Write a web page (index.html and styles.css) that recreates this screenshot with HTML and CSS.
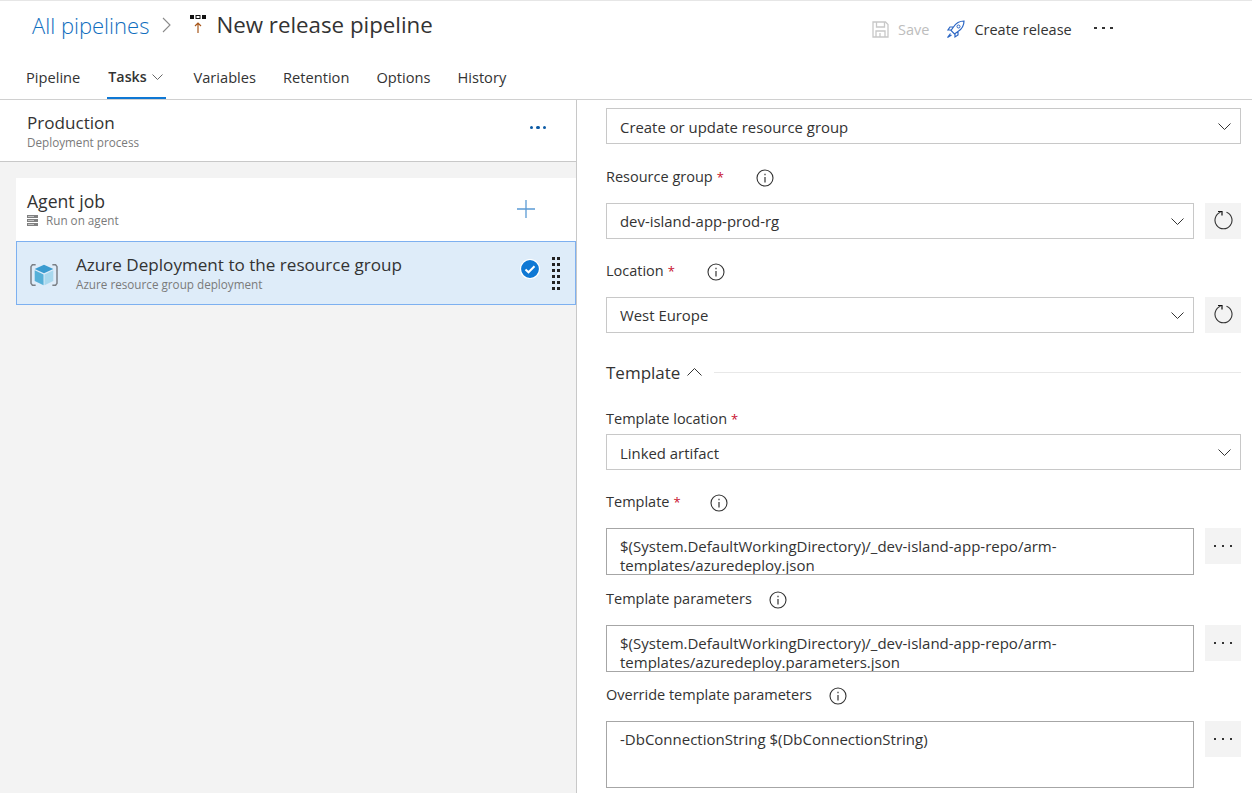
FILE: index.html
```html
<!DOCTYPE html>
<html lang="en">
<head>
    <meta charset="utf-8">
    <title>New release pipeline</title>
    <link rel="stylesheet" href="styles.css">
</head>
<body>
    <div class="page-head">
        <div class="title-row">
            <div class="crumbs">
                <a class="crumb-link">All pipelines</a>
                <svg class="crumb-sep" width="9" height="16" viewBox="0 0 9 16"><path d="M1 1l7 7-7 7" fill="none" stroke="#8a8a8a" stroke-width="1.100"/></svg>
                <svg class="pipe-icon" width="17" height="20" viewBox="0 0 17 20">
                    <rect x="0" y="0" width="4" height="4" fill="#111"/>
                    <rect x="6" y="0.500" width="4" height="3" fill="#fff" stroke="#111"/>
                    <rect x="12" y="0" width="4" height="4" fill="#111"/>
                    <path d="M8 18V8M5 11l3-3 3 3" fill="none" stroke="#a8581c" stroke-width="1.200"/>
                </svg>
                <h1>New release pipeline</h1>
            </div>
            <div class="commands">
                <span class="cmd cmd-off">
                    <svg width="17" height="17" viewBox="0 0 17 17"><path d="M1 1h12.500L16 3.500V16H1zM4.500 1v5h8V1M4 16v-6h9v6M8 12v4" fill="none" stroke="#c8c8c8" stroke-width="1.300"/></svg>
                    Save
                </span>
                <span class="cmd">
                    <svg width="19" height="19" viewBox="0 0 19 19"><path d="M18 1c-4.500 0-8 2-10.500 6L5 10.500 8.500 14l3.500-2.500C16 9 18 5.500 18 1zM7.500 7H4L2 10h3M12 11.500V15l-3 2v-3M4.500 13.500L1.500 17.500 5.500 15" fill="none" stroke="#2b66c4" stroke-width="1.200"/><circle cx="12.500" cy="6.500" r="1.500" fill="none" stroke="#2b66c4"/></svg>
                    Create release
                </span>
                <span class="cmd-more">
                    <i></i><i></i><i></i>
                </span>
            </div>
        </div>
        <div class="tabs">
            <a class="tab">Pipeline</a>
            <a class="tab active">Tasks <svg width="11" height="6" viewBox="0 0 11 6"><path d="M.5.500l5 5 5-5" fill="none" stroke="#666"/></svg></a>
            <a class="tab">Variables</a>
            <a class="tab">Retention</a>
            <a class="tab">Options</a>
            <a class="tab">History</a>
        </div>
    </div>

    <div class="main">
        <div class="left">
            <div class="stage">
                <div>
                    <div class="item-name">Production</div>
                    <div class="item-sub">Deployment process</div>
                </div>
                <span class="stage-more"><i></i><i></i><i></i></span>
            </div>
            <div class="job-list">
                <div class="job">
                    <div>
                        <div class="item-name job-name">Agent job</div>
                        <div class="item-sub">
                            <svg class="server" width="11" height="11" viewBox="0 0 11 11"><path d="M0 0h11v3H0zM0 4h11v3H0zM0 8h11v3H0z" fill="#808080"/><path d="M1 1.500h6M1 5.500h6M1 9.500h6" stroke="#c4c4c4"/></svg>
                            Run on agent
                        </div>
                    </div>
                    <svg class="plus" width="18" height="18" viewBox="0 0 18 18"><path d="M9 0v18M0 9h18" stroke="#5b9bd5" stroke-width="1.300"/></svg>
                </div>
                <div class="task">
                    <svg class="cube" width="28" height="26" viewBox="0 0 30 28">
                        <path d="M6 3H2.500L1 5v18l1.500 2H6M24 3h3.500L29 5v18l-1.500 2H24" fill="none" stroke="#7a7f85" stroke-width="1.600"/>
                        <path d="M15 3l10 4.500L15 12 5 7.500z" fill="#3a9bd0"/>
                        <path d="M5 9l9.500 4.500V25L5 20.500z" fill="#55b0d8"/>
                        <path d="M25 9l-9.500 4.500V25l9.500-4.500z" fill="#a8d8ee"/>
                    </svg>
                    <div class="task-text">
                        <div class="item-name">Azure Deployment to the resource group</div>
                        <div class="item-sub">Azure resource group deployment</div>
                    </div>
                    <svg class="check" width="20" height="20" viewBox="0 0 20 20"><circle cx="10" cy="10" r="9.500" fill="#0f78d4" stroke="#fff" stroke-width="1.200"/><path d="M5.500 10.500l3 2.800 6-6" fill="none" stroke="#fff" stroke-width="2"/></svg>
                    <span class="grip"><i></i><i></i><i></i><i></i><i></i><i></i><i></i><i></i><i></i><i></i><i></i><i></i></span>
                </div>
            </div>
        </div>

        <div class="right">
            <div class="select">Create or update resource group<svg class="chev" width="13" height="7" viewBox="0 0 13 7"><path d="M.5.500l6 6 6-6" fill="none" stroke="#333"/></svg></div>

            <div class="label label-first">Resource group <b>*</b>
                <svg class="info" width="18" height="18" viewBox="0 0 18 18"><circle cx="9" cy="9" r="8" fill="none" stroke="#333" stroke-width="1.100"/><path d="M9 8v5.500M9 4.800v1.500" stroke="#333" stroke-width="1.200"/></svg>
            </div>
            <div class="field-row">
                <div class="select">dev-island-app-prod-rg<svg class="chev" width="13" height="7" viewBox="0 0 13 7"><path d="M.5.500l6 6 6-6" fill="none" stroke="#333"/></svg></div>
                <span class="side-btn"><svg class="refresh" width="20" height="20" viewBox="0 0 20 20"><path d="M12.500 2.300A8.500 8.500 0 1 1 6.500 2.300" fill="none" stroke="#333" stroke-width="1.100"/><path d="M4 1.500h4v4" fill="none" stroke="#111" stroke-width="1.200"/></svg></span>
            </div>

            <div class="label label-loc">Location <b>*</b>
                <svg class="info" width="18" height="18" viewBox="0 0 18 18"><circle cx="9" cy="9" r="8" fill="none" stroke="#333" stroke-width="1.100"/><path d="M9 8v5.500M9 4.800v1.500" stroke="#333" stroke-width="1.200"/></svg>
            </div>
            <div class="field-row">
                <div class="select">West Europe<svg class="chev" width="13" height="7" viewBox="0 0 13 7"><path d="M.5.500l6 6 6-6" fill="none" stroke="#333"/></svg></div>
                <span class="side-btn"><svg class="refresh" width="20" height="20" viewBox="0 0 20 20"><path d="M12.500 2.300A8.500 8.500 0 1 1 6.500 2.300" fill="none" stroke="#333" stroke-width="1.100"/><path d="M4 1.500h4v4" fill="none" stroke="#111" stroke-width="1.200"/></svg></span>
            </div>

            <div class="section">
                <span>Template</span>
                <svg width="15" height="8" viewBox="0 0 15 8"><path d="M.5 7.500l7-7 7 7" fill="none" stroke="#333"/></svg>
                <div class="section-line"></div>
            </div>

            <div class="label label-tight">Template location <b>*</b></div>
            <div class="select">Linked artifact<svg class="chev" width="13" height="7" viewBox="0 0 13 7"><path d="M.5.500l6 6 6-6" fill="none" stroke="#333"/></svg></div>

            <div class="label label-tpl">Template <b>*</b>
                <svg class="info info-tpl" width="18" height="18" viewBox="0 0 18 18"><circle cx="9" cy="9" r="8" fill="none" stroke="#333" stroke-width="1.100"/><path d="M9 8v5.500M9 4.800v1.500" stroke="#333" stroke-width="1.200"/></svg>
            </div>
            <div class="field-row">
                <div class="textbox">$(System.DefaultWorkingDirectory)/_dev-island-app-repo/arm-templates/azuredeploy.json</div>
                <span class="side-btn"><span class="dots"><i></i><i></i><i></i></span></span>
            </div>

            <div class="label label-param">Template parameters
                <svg class="info" width="18" height="18" viewBox="0 0 18 18"><circle cx="9" cy="9" r="8" fill="none" stroke="#333" stroke-width="1.100"/><path d="M9 8v5.500M9 4.800v1.500" stroke="#333" stroke-width="1.200"/></svg>
            </div>
            <div class="field-row">
                <div class="textbox">$(System.DefaultWorkingDirectory)/_dev-island-app-repo/arm-templates/azuredeploy.parameters.json</div>
                <span class="side-btn"><span class="dots"><i></i><i></i><i></i></span></span>
            </div>

            <div class="label label-over">Override template parameters
                <svg class="info" width="18" height="18" viewBox="0 0 18 18"><circle cx="9" cy="9" r="8" fill="none" stroke="#333" stroke-width="1.100"/><path d="M9 8v5.500M9 4.800v1.500" stroke="#333" stroke-width="1.200"/></svg>
            </div>
            <div class="field-row">
                <div class="textbox textbox-tall">-DbConnectionString $(DbConnectionString)</div>
                <span class="side-btn"><span class="dots"><i></i><i></i><i></i></span></span>
            </div>
        </div>
    </div>
</body>
</html>
```

FILE: styles.css
```css
* {
    box-sizing: border-box;
}
body {
    font-family: "Open Sans", "Noto Sans", Arial, sans-serif;
    font-size: 14.500px;
    color: #333;
    background-color: #fff;
    margin: 0;
    height: 793px;
    overflow: hidden;
}
i {
    display: block;
}

/* header */
.page-head {
    height: 100px;
    border-top: 1px solid #e6e6e6;
    border-bottom: 1px solid #d0d0d0;
}
.title-row {
    height: 57px;
    display: flex;
    align-items: center;
    padding-bottom: 10px;
    padding-left: 32px;
}
.crumbs {
    display: flex;
    align-items: center;
    width: 840px;
}
.crumb-link {
    font-size: 22px;
    font-weight: 300;
    color: #106ebe;
}
.crumb-sep {
    margin-left: 13px;
}
.pipe-icon {
    margin-left: 19px;
}
h1 {
    font-size: 22.300px;
    font-weight: 400;
    color: #333;
    margin: 0 0 0 9px;
}
.commands {
    display: flex;
    align-items: center;
    margin-top: 9px;
}
.cmd {
    display: flex;
    align-items: center;
    gap: 9px;
    margin-right: 17px;
}
.cmd-off {
    color: #bdbdbd;
}
.cmd-more {
    display: flex;
    gap: 5px;
    margin-left: 5px;
    margin-bottom: 3px;
}
.cmd-more i {
    width: 3px;
    height: 2px;
    background-color: #333;
}
.tabs {
    display: flex;
    padding-left: 26px;
    gap: 27px;
    height: 41px;
    font-size: 14.650px;
}
.tab {
    height: 41px;
    padding-top: 9px;
}
.tab svg {
    margin-left: 2px;
    vertical-align: 2px;
}
.tab.active {
    font-weight: 600;
    font-size: 14.300px;
    padding-left: 1px;
    padding-right: 3px;
    border-bottom: 2px solid #0f78d4;
}

/* left pane */
.main {
    display: flex;
    height: 693px;
}
.left {
    width: 577px;
    background-color: #f3f3f3;
    border-right: 1px solid #c8c8c8;
}
.stage {
    height: 62px;
    background-color: #fff;
    border-bottom: 1px solid #c8c8c8;
    display: flex;
    justify-content: space-between;
    align-items: center;
    padding: 0 30px 0 27px;
}
.stage-more {
    display: flex;
    gap: 3px;
    margin-bottom: 6px;
}
.stage-more i {
    width: 3.500px;
    height: 3.500px;
    border-radius: 50%;
    background-color: #0b5aa5;
}
.item-name {
    font-size: 17.100px;
    line-height: 22px;
}
.job-name {
    font-size: 17.600px;
    margin-top: 1px;
}
.item-sub {
    font-size: 11.700px;
    line-height: 16px;
    color: #7a7a7a;
}
.job-list {
    margin: 16px 0 0 16px;
}
.job {
    height: 63px;
    background-color: #fff;
    display: flex;
    justify-content: space-between;
    align-items: center;
    padding: 0 41px 2px 11px;
}
.server {
    margin-right: 5px;
    vertical-align: -1px;
}
.task {
    height: 64px;
    background-color: #deecf9;
    border: 1px solid #7db0f0;
    display: flex;
    align-items: center;
    padding-left: 13px;
}
.cube {
    margin-top: 3px;
}
.task-text {
    margin-left: 18px;
    width: 444px;
}
.check {
    margin-bottom: 8px;
}
.grip {
    display: grid;
    grid-template-columns: 3px 3px;
    gap: 3px 2px;
    margin-left: 12px;
}
.grip i {
    width: 3px;
    height: 3px;
    background-color: #222;
}

/* right pane */
.right {
    flex: 1;
    padding: 8px 11px 0 29px;
}
.select {
    height: 36px;
    border: 1px solid #c8c8c8;
    display: flex;
    align-items: center;
    justify-content: space-between;
    padding: 1px 9px 0 13px;
    flex: 1;
    font-size: 14.900px;
}
.field-row {
    display: flex;
    align-items: flex-start;
    gap: 11px;
}
.field-row .select {
    padding-top: 0;
}
.side-btn {
    width: 36px;
    height: 36px;
    background-color: #f3f3f3;
    display: flex;
    align-items: center;
    justify-content: center;
    flex-shrink: 0;
}
.refresh {
    margin: 0 0 2px 2px;
}
.dots {
    display: flex;
    gap: 6px;
}
.dots i {
    width: 2px;
    height: 2px;
    background-color: #333;
}
.label {
    height: 20px;
    line-height: 20px;
    margin-bottom: 16px;
    display: flex;
    align-items: center;
}
.label b {
    color: #c8102e;
    font-weight: 400;
    font-size: 13px;
    margin: 0 15px 0 4px;
}
.info {
    margin-left: 17px;
    margin-top: 2px;
}
.info-tpl {
    margin-left: 14px;
}
.label-first {
    margin-top: 23px;
}
.label-loc {
    margin-top: 22px;
}
.label-tight {
    margin-top: 25px;
    margin-bottom: 5px;
}
.label-tpl {
    margin-top: 22px;
}
.label-param {
    margin-top: 14px;
}
.label-over {
    margin-top: 13px;
}
.section {
    display: flex;
    align-items: center;
    gap: 7px;
    height: 24px;
    margin-top: 27px;
    font-size: 17px;
}
.section-line {
    flex: 1;
    height: 1px;
    background-color: #e8e8e8;
    margin-left: 5px;
}
.textbox {
    flex: 1;
    height: 47px;
    border: 1px solid #a6a6a6;
    padding: 8px 13px 0;
    font-size: 15px;
    line-height: 19px;
    overflow: hidden;
}
.textbox-tall {
    height: 67px;
}
```
